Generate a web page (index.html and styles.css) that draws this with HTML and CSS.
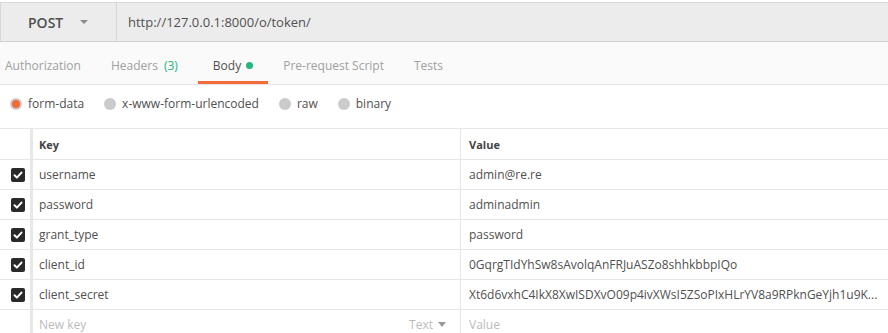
FILE: index.html
```html
<!DOCTYPE html>
<html lang="en">

<head>
    <meta charset="UTF-8">
    <title>Request</title>
    <link rel="stylesheet" href="styles.css">
</head>

<body>

    <!-- method + url -->
    <div class="request-bar">
        <div class="method">POST <span class="caret"></span></div>
        <div class="url">http://127.0.0.1:8000/o/token/</div>
    </div>

    <!-- tabs -->
    <div class="tabs">
        <div class="tab">Authorization</div>
        <div class="tab">Headers <span class="count">(3)</span></div>
        <div class="tab active">Body <span class="dot"></span></div>
        <div class="tab">Pre-request Script</div>
        <div class="tab">Tests</div>
    </div>

    <!-- body type -->
    <div class="body-types">
        <label class="radio"><span class="circle on"></span>form-data</label>
        <label class="radio"><span class="circle"></span>x-www-form-urlencoded</label>
        <label class="radio"><span class="circle"></span>raw</label>
        <label class="radio"><span class="circle"></span>binary</label>
    </div>

    <!-- params table -->
    <div class="params">
        <div class="row head">
            <div class="check"></div>
            <div class="key">Key</div>
            <div class="value">Value</div>
        </div>
        <div class="row">
            <div class="check"><span class="box"><svg viewBox="0 0 14 14"><path d="M3.5 7.2l2.4 2.4 4.6-5" /></svg></span></div>
            <div class="key">username</div>
            <div class="value">admin@re.re</div>
        </div>
        <div class="row">
            <div class="check"><span class="box"><svg viewBox="0 0 14 14"><path d="M3.5 7.2l2.4 2.4 4.6-5" /></svg></span></div>
            <div class="key">password</div>
            <div class="value">adminadmin</div>
        </div>
        <div class="row">
            <div class="check"><span class="box"><svg viewBox="0 0 14 14"><path d="M3.5 7.2l2.4 2.4 4.6-5" /></svg></span></div>
            <div class="key">grant_type</div>
            <div class="value">password</div>
        </div>
        <div class="row">
            <div class="check"><span class="box"><svg viewBox="0 0 14 14"><path d="M3.5 7.2l2.4 2.4 4.6-5" /></svg></span></div>
            <div class="key">client_id</div>
            <div class="value">0GqrgTIdYhSw8sAvolqAnFRJuASZo8shhkbbpIQo</div>
        </div>
        <div class="row">
            <div class="check"><span class="box"><svg viewBox="0 0 14 14"><path d="M3.5 7.2l2.4 2.4 4.6-5" /></svg></span></div>
            <div class="key">client_secret</div>
            <div class="value"><span class="clip">Xt6d6vxhC4IkX8XwISDXvO09p4ivXWsI5ZSoPIxHLrYV8a9RPknGeYjh1u9K...</span></div>
        </div>
        <div class="row new">
            <div class="check"></div>
            <div class="key">New key <span class="type">Text <span class="caret small"></span></span></div>
            <div class="value">Value</div>
        </div>
    </div>

</body>

</html>
```

FILE: styles.css
```css
body {
    margin: 0;
    font-family: 'Open Sans', 'Liberation Sans', sans-serif;
    color: #505050;
    background-color: #fff;
    overflow: hidden;
}

.request-bar {
    margin-top: 2px;
    height: 38px;
    display: flex;
    background-color: #ececec;
    border-top: 1px solid #d8d8d8;
    border-bottom: 1px solid #d2d2d2;
    border-left: 1px solid #d8d8d8;
}

.method {
    width: 88px;
    padding-left: 27px;
    display: flex;
    align-items: center;
    font-size: 14px;
    font-weight: 600;
    color: #505050;
    border-right: 1px solid #d6d6d6;
}

.caret {
    width: 0;
    height: 0;
    margin-left: 17px;
    border-left: 4px solid transparent;
    border-right: 4px solid transparent;
    border-top: 4px solid #8a8a8a;
}

.caret.small {
    margin-left: 5px;
    border-top: 5px solid #999;
}

.url {
    padding-left: 11px;
    display: flex;
    align-items: center;
    font-size: 13px;
    color: #505050;
}

.tabs {
    height: 42px;
    display: flex;
    background-color: #fafafa;
    border-bottom: 1px solid #e6e6e6;
}

.tab {
    padding: 8px 15px 0;
    display: flex;
    align-items: center;
    font-size: 12px;
    color: #a0a0a0;
    border-bottom: 3px solid transparent;
    box-sizing: border-box;
}

.tab:first-child {
    margin-left: -10px;
}

.tab .count {
    color: #26b47f;
    margin: 0 5px 0 6px;
}

.tab.active {
    color: #505050;
    border-bottom-color: #f26b3a;
}

.dot {
    width: 7px;
    height: 7px;
    margin-left: 5px;
    border-radius: 50%;
    background-color: #26b47f;
}

.body-types {
    height: 37px;
    padding: 0 0 6px 10px;
    display: flex;
    align-items: center;
}

.radio {
    display: flex;
    align-items: center;
    font-size: 12px;
    color: #505050;
    margin-right: 20px;
}

.circle {
    width: 12px;
    height: 12px;
    margin-right: 6px;
    border-radius: 50%;
    background-color: #cbcbcb;
    box-sizing: border-box;
}

.circle.on {
    background-color: #f26b3a;
    border: 2px solid #cfc6c2;
}

.params {
    border-top: 1px solid #e8e8e8;
}

.row {
    display: flex;
    height: 29px;
    border-bottom: 1px solid #e6e6e6;
    font-size: 12px;
}

.row.head {
    height: 30px;
    font-size: 11px;
    font-weight: 700;
    color: #444;
}

.check {
    width: 30px;
    border-right: 3px solid #e8e8e8;
    display: flex;
    align-items: center;
}

.box {
    width: 14px;
    height: 14px;
    margin-left: 11px;
    border-radius: 2px;
    background-color: #2a2a2a;
    display: flex;
}

.box svg {
    width: 14px;
    height: 14px;
}

.box path {
    fill: none;
    stroke: #fff;
    stroke-width: 2;
    stroke-linecap: round;
    stroke-linejoin: round;
}

.key {
    width: 427px;
    box-sizing: border-box;
    padding: 0 14px 0 6px;
    display: flex;
    align-items: center;
    white-space: nowrap;
}

.value {
    flex: 1;
    min-width: 0;
    padding: 0 10px 0 8px;
    border-left: 1px solid #e6e6e6;
    display: flex;
    align-items: center;
    white-space: nowrap;
    overflow: hidden;
}

.clip {
    overflow: hidden;
    text-overflow: ellipsis;
}

.row.new {
    color: #bbb;
}

.type {
    margin-left: auto;
    display: flex;
    align-items: center;
}
```
